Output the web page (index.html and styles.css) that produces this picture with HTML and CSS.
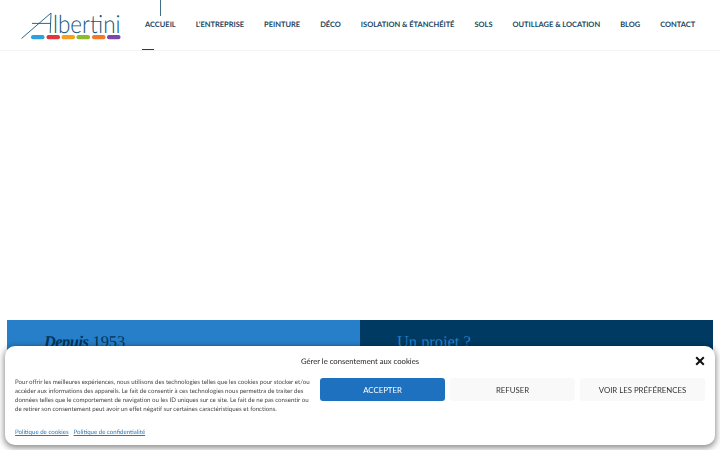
FILE: index.html
```html
<!DOCTYPE html>
<html lang="fr">
<head>
<meta charset="utf-8">
<title>Albertini</title>
<link rel="stylesheet" href="styles.css">
</head>
<body>
<header class="site-header">
  <a class="logo" href="#">
    <svg class="logo-svg" width="102" height="42" viewBox="0 -10 102 42">
      <path class="logo-stroke" d="M1.5 26.5 L31 1 L30.2 21"/>
      <path class="logo-stroke" d="M12 11.4 H31"/>
      <text class="logo-text" transform="translate(33 21) scale(.9 1)">lbertini</text>
      <rect class="c1" x="11" y="23" width="13.5" height="4.2" rx="2"/>
      <rect class="c2" x="26.5" y="23" width="13.5" height="4.2" rx="2"/>
      <rect class="c3" x="41.5" y="23" width="13.5" height="4.2" rx="2"/>
      <rect class="c4" x="56.5" y="23" width="13.5" height="4.2" rx="2"/>
      <rect class="c5" x="72" y="23" width="13.5" height="4.2" rx="2"/>
      <rect class="c6" x="87" y="23" width="13.5" height="4.2" rx="2"/>
    </svg>
  </a>
  <nav class="nav">
    <a class="nav-item active" href="#">ACCUEIL</a>
    <a class="nav-item" href="#">L'ENTREPRISE</a>
    <a class="nav-item" href="#">PEINTURE</a>
    <a class="nav-item" href="#">DÉCO</a>
    <a class="nav-item" href="#">ISOLATION &amp; ÉTANCHÉITÉ</a>
    <a class="nav-item" href="#">SOLS</a>
    <a class="nav-item" href="#">OUTILLAGE &amp; LOCATION</a>
    <a class="nav-item" href="#">BLOG</a>
    <a class="nav-item" href="#">CONTACT</a>
  </nav>
</header>
<main>
  <div class="hero"></div>
  <section class="band">
    <div class="band-col band-light"><h2 class="band-title"><em class="band-em">Depuis</em> 1953</h2></div>
    <div class="band-col band-dark"><h2 class="band-title">Un projet ?</h2></div>
  </section>
</main>
<aside class="consent">
  <div class="consent-head">
    <span class="consent-title">Gérer le consentement aux cookies</span>
    <svg class="consent-close" width="10" height="10" viewBox="0 0 10 10"><path d="M1.2 1.2 L8.8 8.8 M8.8 1.2 L1.2 8.8"/></svg>
  </div>
  <div class="consent-body">
    <div class="consent-copy">
      <p class="consent-text">Pour offrir les meilleures expériences, nous utilisons des technologies telles que les cookies pour stocker et/ou accéder aux informations des appareils. Le fait de consentir à ces technologies nous permettra de traiter des données telles que le comportement de navigation ou les ID uniques sur ce site. Le fait de ne pas consentir ou de retirer son consentement peut avoir un effet négatif sur certaines caractéristiques et fonctions.</p>
      <div class="consent-links"><a href="#">Politique de cookies</a><a href="#">Politique de confidentialité</a></div>
    </div>
    <div class="consent-buttons">
      <button class="btn btn-primary">ACCEPTER</button>
      <button class="btn">REFUSER</button>
      <button class="btn">VOIR LES PRÉFÉRENCES</button>
    </div>
  </div>
</aside>
</body>
</html>
```
FILE: styles.css
```css
* { box-sizing: border-box; }
html, body { margin: 0; padding: 0; }
body { width: 720px; height: 450px; overflow: hidden; background: #fff; font-family: "Lato", sans-serif; text-rendering: geometricPrecision; }
a { text-decoration: none; color: inherit; }
.site-header { height: 51px; display: flex; padding-left: 20px; border-bottom: 1px solid #f4f4f4; }
.logo { width: 125px; padding-top: 2px; flex: none; }
.logo-svg { display: block; }
.logo-stroke { fill: none; stroke: #17567a; stroke-width: .9; }
.logo-text { font-family: "Lato", sans-serif; font-weight: 300; font-size: 25px; fill: #17567a; }
.c1 { fill: #2aa3dc; } .c2 { fill: #e2353f; } .c3 { fill: #f4a11f; }
.c4 { fill: #8dbb2d; } .c5 { fill: #ee7a2a; } .c6 { fill: #7d47a8; }
.nav { display: flex; gap: 20px; }
.nav-item { position: relative; font-size: 7.47px; font-weight: 700; line-height: 50px; color: #24475f; white-space: nowrap; }
.active::before { content: ""; position: absolute; left: 15px; top: 0; width: 1px; height: 16px; background: #3f6f87; }
.active::after { content: ""; position: absolute; left: -3px; top: 49px; width: 12px; height: 1px; background: #17415c; }
.hero { height: 269px; }
.band { display: flex; margin: 0 7px; height: 60px; }
.band-col { flex: 1; padding: 11px 37px; }
.band-light { background: #267fc8; color: #00335a; }
.band-dark { background: #003a63; color: #267fc8; }
.band-title { margin: 0; font-family: "Liberation Serif", serif; font-size: 16.4px; font-weight: 400; line-height: 22px; }
.band-em { font-weight: 700; letter-spacing: -.5px; }
.consent { position: fixed; left: 5px; top: 346px; width: 710px; height: 99px; padding: 9px 10px 0; background: #fff; border-radius: 10px; box-shadow: 0 2px 6px 1px rgba(0,0,0,.45); color: #222; }
.consent-head { position: relative; height: 14px; text-align: center; }
.consent-title { font-size: 7.7px; line-height: 12px; display: block; }
.consent-close { position: absolute; right: 0; top: 1px; }
.consent-close path { fill: none; stroke: #111; stroke-width: 2; }
.consent-body { display: flex; gap: 10px; margin-top: 9px; }
.consent-copy { width: 296px; flex: none; }
.consent-text { margin: 0; font-size: 6.14px; line-height: 9px; color: #444; }
.consent-links { display: flex; gap: 5px; margin-top: 14px; font-size: 6.1px; line-height: 9px; color: #2a78ba; }
.consent-links a { text-decoration: underline; }
.consent-buttons { display: flex; gap: 5px; margin-left: -1px; }
.btn { width: 125px; height: 23px; border: 0; border-radius: 3px; background: #f9f9f9; color: #333; font-family: inherit; font-size: 7.8px; padding: 0; }
.btn-primary { background: #1e71bf; color: #fff; }
```
